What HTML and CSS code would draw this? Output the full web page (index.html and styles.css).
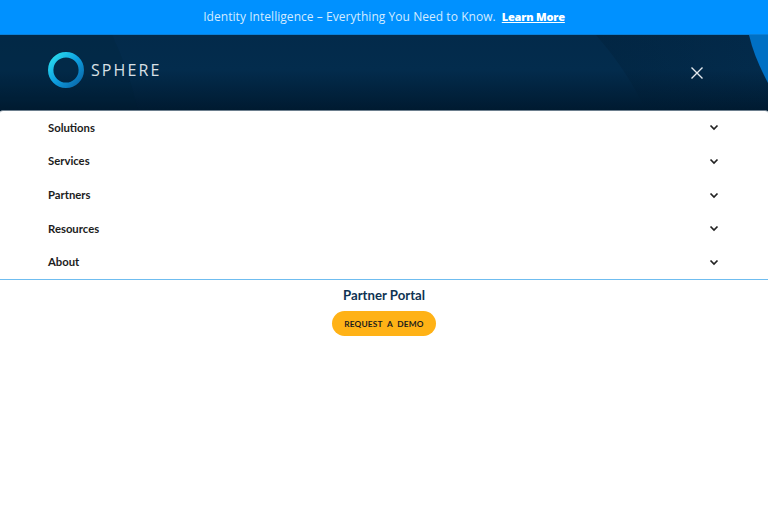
FILE: index.html
```html
<!DOCTYPE html>
<html lang="en">
<head>
<meta charset="utf-8">
<title>Sphere</title>
<link rel="stylesheet" href="styles.css">
</head>
<body>
<div class="promo">
  <span class="promo-text">Identity Intelligence – Everything You Need to Know.</span>
  <a class="promo-link" href="#">Learn More</a>
</div>
<header class="masthead">
  <svg class="mast-art" width="768" height="76" viewBox="0 0 768 76" aria-hidden="true">
    <defs>
      <linearGradient id="shade" x1="0" y1="0" x2="1" y2="0">
        <stop offset="0" stop-color="#001c33" stop-opacity=".32"/>
        <stop offset="1" stop-color="#001c33" stop-opacity=".05"/>
      </linearGradient>
    </defs>
    <path d="M0 0 L112 0 C124 25 132 50 138 76 L0 76Z" fill="#001c33" opacity=".16"/>
    <path d="M596 0 C618 25 634 50 646 76 L768 76 L768 0Z" fill="url(#shade)"/>
    <path d="M749 0 C753 17 760 33 768 48 L768 0Z" fill="#0070c4"/>
  </svg>
  <a class="logo" href="#">
    <svg class="logo-ring" width="36" height="36" viewBox="0 0 36 36" aria-hidden="true">
      <defs>
        <linearGradient id="ring" x1="0" y1="0" x2="1" y2="1">
          <stop offset="0" stop-color="#2ce0ee"/>
          <stop offset=".5" stop-color="#0d9fe0"/>
          <stop offset="1" stop-color="#0a64a6"/>
        </linearGradient>
      </defs>
      <circle cx="18" cy="18" r="15.300" fill="none" stroke="url(#ring)" stroke-width="5.400"/>
    </svg>
    <span class="logo-word">SPHERE</span>
  </a>
  <button class="close" aria-label="Close">
    <svg width="14" height="14" viewBox="0 0 14 14" aria-hidden="true"><path d="M1.5 1.5 L12.5 12.5 M12.5 1.5 L1.5 12.5" stroke="#e4e9ee" stroke-width="1.4" fill="none"/></svg>
  </button>
</header>
<nav class="menu">
  <a class="menu-row" href="#"><span>Solutions</span><svg class="chev" width="10" height="7" viewBox="0 0 10 7"><path d="M1.5 1.5 L5 5 L8.500 1.500" fill="none" stroke="#222" stroke-width="1.7"/></svg></a>
  <a class="menu-row" href="#"><span>Services</span><svg class="chev" width="10" height="7" viewBox="0 0 10 7"><path d="M1.5 1.5 L5 5 L8.500 1.500" fill="none" stroke="#222" stroke-width="1.7"/></svg></a>
  <a class="menu-row" href="#"><span>Partners</span><svg class="chev" width="10" height="7" viewBox="0 0 10 7"><path d="M1.5 1.5 L5 5 L8.500 1.500" fill="none" stroke="#222" stroke-width="1.7"/></svg></a>
  <a class="menu-row" href="#"><span>Resources</span><svg class="chev" width="10" height="7" viewBox="0 0 10 7"><path d="M1.5 1.5 L5 5 L8.500 1.500" fill="none" stroke="#222" stroke-width="1.7"/></svg></a>
  <a class="menu-row" href="#"><span>About</span><svg class="chev" width="10" height="7" viewBox="0 0 10 7"><path d="M1.5 1.5 L5 5 L8.500 1.500" fill="none" stroke="#222" stroke-width="1.7"/></svg></a>
</nav>
<div class="actions">
  <a class="portal" href="#">Partner Portal</a>
  <a class="demo" href="#">REQUEST A DEMO</a>
</div>
</body>
</html>
```
FILE: styles.css
```css
* { box-sizing: border-box; }
html, body { margin: 0; padding: 0; }
body { width: 768px; height: 512px; overflow: hidden; background: #fff; font-family: "Open Sans", "Liberation Sans", sans-serif; }
a { text-decoration: none; }

.promo { height: 35px; background: #0091ff; display: flex; justify-content: center; align-items: center; gap: 6px; font-size: 12px; color: #d3ebff; padding-bottom: 1px; border-bottom: 1px solid #0a7fd8; }
.promo-text { letter-spacing: .05px; }
.promo-link { color: #fff; font-weight: 800; font-size: 11px; text-decoration: underline; letter-spacing: -.2px; }

.masthead { position: relative; height: 76px; background: linear-gradient(#032a4a 0%, #032c4d 45%, #001a30 100%); display: flex; justify-content: space-between; align-items: center; padding: 0 64px 0 48px; }
.mast-art { position: absolute; inset: 0; }
.logo { position: relative; display: flex; align-items: center; gap: 7px; margin-top: -6px; }
.logo-ring { display: block; }
.logo-word { color: #d9e0e6; font-size: 16px; letter-spacing: 2.1px; }
.close { position: relative; background: none; border: 0; padding: 0; display: flex; margin-top: -1px; }

.menu { position: relative; margin-top: -1px; border-top: 1px solid #6d7f8e; border-bottom: 1px solid #6fbdf0; border-radius: 3px 3px 0 0; background: #fff; height: 170px; display: flex; flex-direction: column; }
.menu-row { flex: none; height: 33.700px; display: flex; justify-content: space-between; align-items: center; padding: 0 49px 0 48px; font-family: "Lato", sans-serif; font-weight: 700; font-size: 11.3px; color: #1c1c1c; }
.menu-row:first-child { margin-top: -.7px; }
.chev { margin-top: 1px; }

.actions { display: flex; flex-direction: column; align-items: center; padding-top: 6px; gap: 6px; }
.portal { color: #0f3352; font-family: "Lato", sans-serif; font-weight: 700; font-size: 13.200px; line-height: 19px; }
.demo { height: 25px; width: 104px; border-radius: 13px; background: #ffb216; color: #1c1c1c; display: flex; align-items: center; justify-content: center; font-family: "Lato", sans-serif; font-weight: 700; font-size: 8.300px; letter-spacing: .2px; word-spacing: 2.500px; }
```
